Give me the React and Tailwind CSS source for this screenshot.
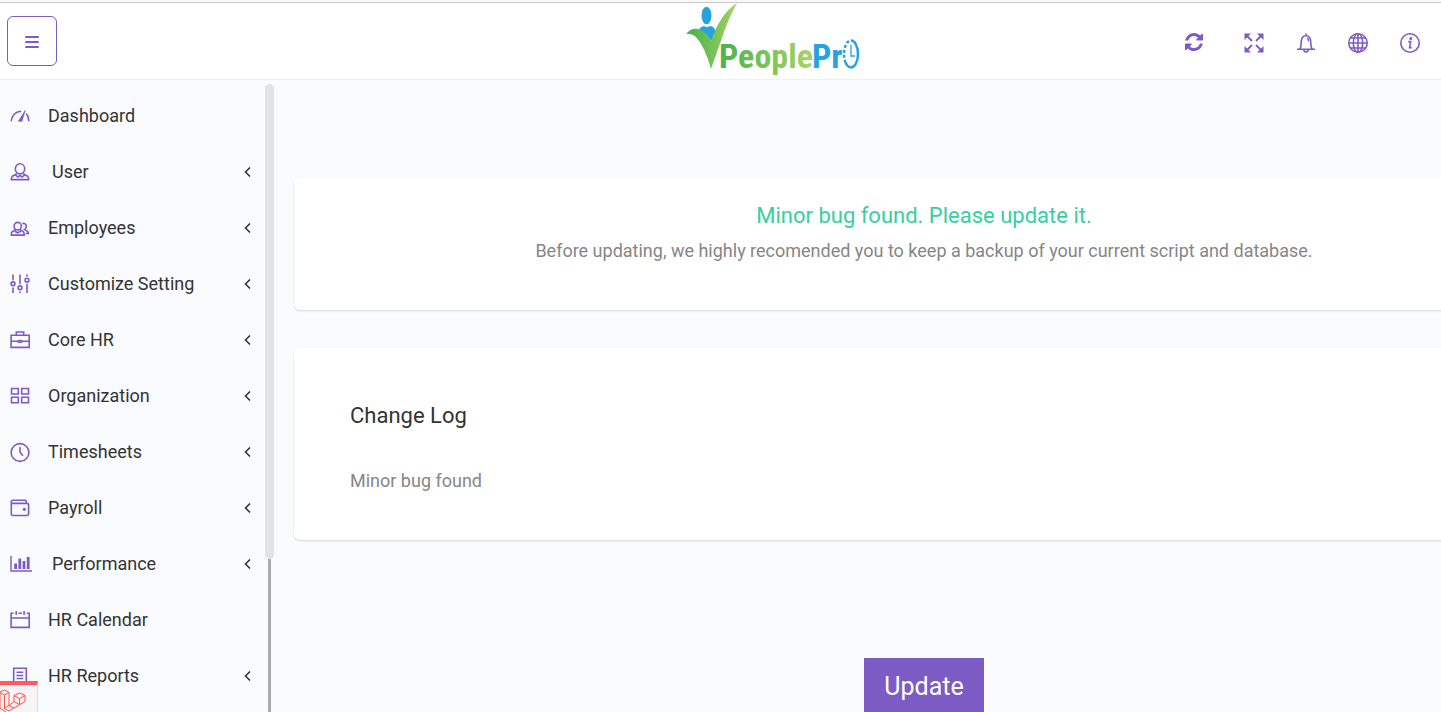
import React from "react";

function Icon({ children, className = "size-5", box = "0 0 20 20" }) {
  return (
    <svg
      viewBox={box}
      className={`shrink-0 overflow-visible ${className}`}
      fill="none"
      stroke="currentColor"
      strokeWidth="1.6"
      aria-hidden="true"
    >
      {children}
    </svg>
  );
}

const icons = {
  dashboard: (
    <Icon>
      <path d="M1.200 15.300C1.600 9.600 5.600 5.400 11.200 5.300M16.300 7.600c1.600 1.900 2.400 4.500 2.500 7.700" />
      <path d="M15.300 4.300 12 15.300H8.300Z" fill="currentColor" strokeWidth=".6" />
    </Icon>
  ),
  user: (
    <Icon>
      <ellipse cx="10" cy="6.800" rx="4.700" ry="5.100" />
      <path d="M6.900 11.600 2.500 14.200Q1.300 15 1.300 17.600H18.700Q18.700 15 17.500 14.200L13.100 11.600M5.500 13.200 8 14.900 10 13.400 12 14.900 14.500 13.200" />
    </Icon>
  ),
  employees: (
    <Icon>
      <ellipse cx="7.700" cy="8.200" rx="3.600" ry="3.800" />
      <path d="M5.500 11.700 2.300 13.600Q1.300 14.500 1.300 17.100H14.200Q14.200 14.500 13.200 13.600L10 11.700M4.700 13.200 7.700 14.800 10.700 13.200" />
      <path d="M12.300 5.600c2.300-.7 4 .7 4 2.600 0 1.600-.7 2.700-1.900 3.400l3.100 1.700q1 .8 1 2.200H15.500" />
    </Icon>
  ),
  sliders: (
    <Icon>
      <circle cx="3" cy="9.800" r="1.900" />
      <circle cx="10" cy="13.800" r="1.900" />
      <circle cx="17" cy="6.200" r="1.900" />
      <path d="M3 .5v5.700M3 13.400v5.600M10 .5v9.700M10 17.400V19M17 .5v2M17 9.800V19" />
    </Icon>
  ),
  briefcase: (
    <Icon>
      <path d="M1.100 5.200H19.200V17.400H1.100ZM6.300 5.200V2H13.700V5.200M1.100 11.300H8M12 11.300H19.200" />
      <rect x="8" y="10.500" width="4" height="1.800" rx=".9" />
    </Icon>
  ),
  grid: (
    <Icon>
      <path d="M1.500 2.500H8.300V8H1.500ZM11.700 2.500H18.500V8H11.700ZM1.500 11.300H8.300V16.800H1.500ZM11.700 11.300H18.500V16.800H11.700Z" />
    </Icon>
  ),
  clock: (
    <Icon>
      <circle cx="10" cy="10.500" r="8.900" />
      <path d="M10 5V10.300L13 13.700" />
    </Icon>
  ),
  wallet: (
    <Icon>
      <path d="M16.300 5.300V3.300Q16.300 2.200 15.200 2.200H3Q1.300 2.200 1.300 4V16Q1.300 17.500 2.800 17.500H17Q18.600 17.500 18.600 16V6.800Q18.600 5.400 17 5.400H3Q1.300 5.400 1.300 4" />
      <circle cx="14.300" cy="11.300" r=".8" fill="currentColor" />
    </Icon>
  ),
  chart: (
    <Icon className="h-5 w-[22px]" box="0 0 22 20">
      <path d="M1 1.800V17H22" strokeWidth="1.400" />
      <path d="M4.200 9.500H7V15H4.200ZM8.400 4.500H11.200V15H8.400ZM12.600 7H15.400V15H12.600ZM16.800 3H19.600V15H16.800Z" fill="currentColor" stroke="none" />
    </Icon>
  ),
  calendar: (
    <Icon>
      <path d="M3.700 3.200H1.100V17.400H19.200V3.200H16.600M8.500 3.200H11.900M1.100 8H19.200" />
      <path d="M6.200 1V5M14.100 1V5" />
    </Icon>
  ),
  report: (
    <Icon>
      <path d="M3.700 19V2.200H16.300V19ZM6.500 6.300H13.300M6.500 9.500H13.300M6.500 12.500H13.300" />
    </Icon>
  ),
};

const items = [
  { icon: "dashboard", label: "Dashboard" },
  { icon: "user", label: "User", sub: true, spaced: true },
  { icon: "employees", label: "Employees", sub: true },
  { icon: "sliders", label: "Customize Setting", sub: true },
  { icon: "briefcase", label: "Core HR", sub: true },
  { icon: "grid", label: "Organization", sub: true },
  { icon: "clock", label: "Timesheets", sub: true },
  { icon: "wallet", label: "Payroll", sub: true },
  { icon: "chart", label: "Performance", sub: true, spaced: true },
  { icon: "calendar", label: "HR Calendar" },
  { icon: "report", label: "HR Reports", sub: true },
];

function Logo() {
  return (
    <svg viewBox="0 0 174 78" className="h-[78px] w-[174px] overflow-visible" role="img" aria-label="PeoplePro">
      <defs>
        <linearGradient id="tick" x1="0" x2="1">
          <stop offset="0" stopColor="#45b04a" />
          <stop offset="1" stopColor="#a5d266" />
        </linearGradient>
        <linearGradient id="word" x1="0" x2="1">
          <stop offset="0" stopColor="#4ab24a" />
          <stop offset="1" stopColor="#a8d468" />
        </linearGradient>
      </defs>
      <ellipse cx="20.500" cy="12.500" rx="5" ry="8.700" fill="#25a3e0" />
      <path d="M13 28Q13 24 18 23Q21 25 24 23Q29 23 29.500 30L25 38Q20 29 13 28Z" fill="#25a3e0" />
      <path d="M0 31Q5 25 12 26Q20 28 25 38Q34 11 51 0Q42 16 36 35L25 66Q19 44 10 34Q5 30 0 31Z" fill="url(#tick)" />
      <text x="33" y="65" fontSize="34" fontWeight="700" fill="url(#word)" fontFamily="'Liberation Sans Narrow', 'Roboto Condensed', Roboto, sans-serif">
        People
      </text>
      <text x="126" y="65" fontSize="34" fontWeight="700" fill="#25a3e0" fontFamily="'Liberation Sans Narrow', 'Roboto Condensed', Roboto, sans-serif">
        Pr
      </text>
      <ellipse cx="165" cy="51" rx="7" ry="13.500" fill="none" stroke="#25a3e0" strokeWidth="2.500" strokeDasharray="27 2 3 2 3 2 3 2 3 2 40" />
      <path d="M165 42V53H169" fill="none" stroke="#25a3e0" strokeWidth="1.300" />
    </svg>
  );
}

function Tool({ label, className = "", children }) {
  return (
    <button type="button" aria-label={label} className={`flex size-5 items-center justify-center ${className}`}>
      {children}
    </button>
  );
}

export default function App() {
  return (
    <div className="flex h-screen flex-col overflow-hidden bg-[#fafbff] font-[Roboto,sans-serif] text-[#333]">
      <div className="h-[3px] shrink-0 border-b border-[#c8c8c8] bg-[#f8f8f8]" />
      <header className="grid h-[77px] shrink-0 grid-cols-[13fr_174px_11fr] items-center border-b border-[#eff0f4] bg-white text-[#7c5cc4]">
        <button
          type="button"
          aria-label="Toggle menu"
          className="mb-0.5 ml-[7px] flex size-[50px] items-center justify-center rounded-md border border-[#7c5cc4]"
        >
          <Icon className="h-4 w-3.5" box="0 0 14 16">
            <path d="M1 4H13M1 9H13M1 14H13" strokeWidth="2" strokeLinecap="round" />
          </Icon>
        </button>
        <Logo />
        <div className="flex items-center justify-end gap-8 pt-0.5 pr-[21px]">
          <Tool label="Refresh" className="mr-2">
            <Icon className="size-[18px]" box="0 80 1536 1536">
              <path
                transform="translate(0 1408) scale(1 -1)"
                fill="currentColor"
                stroke="none"
                d="M1511 480q0 -5 -1 -7q-64 -268 -268 -434.5t-478 -166.5q-146 0 -282.5 55t-243.5 157l-129 -129q-19 -19 -45 -19t-45 19t-19 45v448q0 26 19 45t45 19h448q26 0 45 -19t19 -45t-19 -45l-137 -137q71 -66 161 -102t187 -36q134 0 250 65t186 179q11 17 53 117q8 23 30 23h192q13 0 22.5 -9.5t9.5 -22.5zM1536 1280v-448q0 -26 -19 -45t-45 -19h-448q-26 0 -45 19t-19 45t19 45l138 138q-148 137 -349 137q-134 0 -250 -65t-186 -179q-11 -17 -53 -117q-8 -23 -30 -23h-199q-13 0 -22.5 9.5t-9.5 22.5v7q65 268 270 434.5t480 166.5q146 0 284 -55.5t245 -156.5l130 129q19 19 45 19t45 -19t19 -45z"
              />
            </Icon>
          </Tool>
          <Tool label="Full screen">
            <Icon>
              <path d="M2 2 8 8M18 2 12 8M2 18 8 12M18 18 12 12" strokeWidth="1.800" />
              <path d="M.5.500H7L.5 7ZM19.500.500V7L13 .5ZM.5 19.500V13L7 19.500ZM19.500 19.500H13L19.500 13Z" fill="currentColor" stroke="none" />
            </Icon>
          </Tool>
          <Tool label="Notifications">
            <Icon>
              <path d="M1 16.300H19M3.700 16Q5.200 14.500 5.200 9.500C5.200 5.200 6.700 2.800 10 2.800S14.800 5.200 14.800 9.500Q14.800 14.500 16.300 16M10 .5V2.800M7.800 16.800Q8 19 10 19T12.200 16.800M11.200 5.200Q12.600 5.800 12.600 8.300" />
            </Icon>
          </Tool>
          <Tool label="Language">
            <Icon>
              <circle cx="10" cy="10" r="9.200" />
              <ellipse cx="10" cy="10" rx="4.700" ry="9.200" />
              <path d="M10 .8V19.200M.8 10H19.200M2.500 5H17.500M2.500 15H17.500" />
            </Icon>
          </Tool>
          <Tool label="Information">
            <Icon>
              <circle cx="10" cy="10" r="9.200" />
              <path d="M8.300 8.600H10.700L9.500 14.600H11.700" />
              <circle cx="10.800" cy="5.500" r=".7" fill="currentColor" />
            </Icon>
          </Tool>
        </div>
      </header>

      <div className="flex min-h-0 flex-1">
        <aside className="flex w-[274px] shrink-0">
          <nav className="min-w-0 flex-1 overflow-hidden pt-2">
            <ul>
              {items.map(({ icon, label, sub, spaced }) => (
                <li key={label}>
                  <a href="#" className="flex h-14 items-center pr-3 pl-2.5 text-lg">
                    <span className="flex w-[38px] shrink-0 text-[#7c5cc4]">{icons[icon]}</span>
                    <span className={spaced ? "flex-1 pl-1" : "flex-1"}>{label}</span>
                    {sub && (
                      <Icon className="h-3 w-2.5" box="0 0 10 12">
                        <path d="M7 1.500 2.500 6 7 10.500" />
                      </Icon>
                    )}
                  </a>
                </li>
              ))}
            </ul>
          </nav>
          <div className="flex w-[9px] flex-col items-center pt-1">
            <div className="h-[475px] w-full shrink-0 rounded-full bg-[#e2e4e3]" />
            <div className="w-[3px] flex-1 bg-[#aaabad]" />
          </div>
        </aside>

        <main className="min-w-0 flex-1 overflow-hidden pt-[98px] pl-5">
          <div className="-mr-[113px] flex flex-col">
            <section className="rounded-md bg-white px-14 pt-5 pb-[42px] text-center shadow-[0_1px_2px_rgba(0,0,0,0.15)]">
              <h1 className="text-[22px] leading-9 text-[#36cfa2]">Minor bug found. Please update it.</h1>
              <p className="text-lg leading-[34px] text-[#868686]">
                Before updating, we highly recomended you to keep a backup of your current script and database.
              </p>
            </section>
            <section className="mt-[38px] rounded-md bg-white px-14 pt-[50px] pb-[42px] shadow-[0_1px_2px_rgba(0,0,0,0.15)]">
              <h2 className="text-[22px] leading-9">Change Log</h2>
              <p className="mt-[30px] text-lg leading-[34px] text-[#868686]">Minor bug found</p>
            </section>
            <button
              type="button"
              className="mt-[118px] self-center bg-[#7c5cc4] px-5 py-2.5 text-[25px] leading-[38px] text-white"
            >
              Update
            </button>
          </div>
        </main>
      </div>

      <a
        href="#"
        aria-label="Open debug bar"
        className="fixed bottom-0 left-0 h-[31px] w-[38px] overflow-hidden border-t-4 border-r border-t-[#ff5a5f] border-r-[#ddd] bg-[#f5f5f5] text-[#ff4f43]"
      >
        <Icon className="h-[27px] w-[27px]" box="0 0 27 27">
          <path
            d="M0 7 4.500 5 9 7.500V20.500L14 23 25 16.500V10.500L19.500 8 14 10.500V16.500L9 20.500M0 7.500 4.500 10 9 7.500M4.500 10V23.500L9 26 14 23M14 10.500 19.500 13.500 25 10.500M19.500 13.500V19.500M14 16.500 19.500 19.500M0 8V23L6 27M9 20.500 4.500 23.500"
            strokeWidth="1"
          />
        </Icon>
      </a>
    </div>
  );
}
